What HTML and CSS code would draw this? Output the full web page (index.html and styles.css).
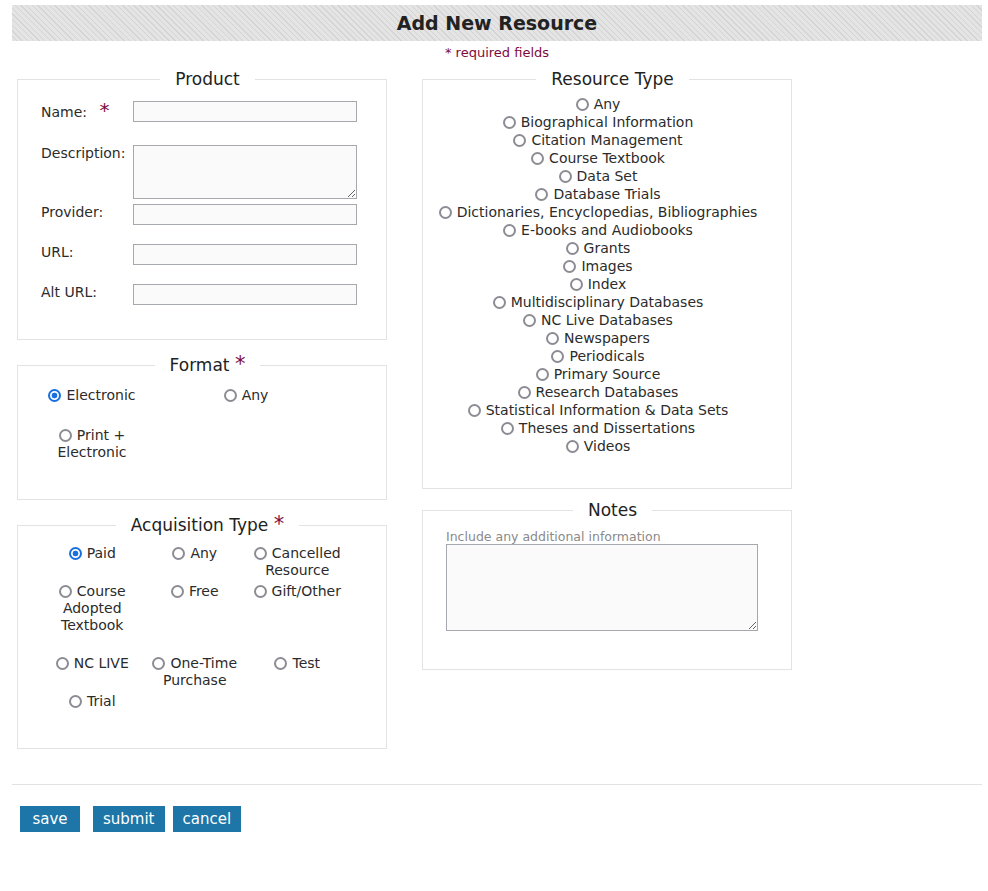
FILE: index.html
```html
<!DOCTYPE html>
<html lang="en">
<head>
<meta charset="utf-8">
<title>Add New Resource</title>
<link rel="stylesheet" href="styles.css">
</head>
<body>
<div class="page">
  <h1 class="title-bar">Add New Resource</h1>
  <p class="required-note">* required fields</p>

  <form class="columns">
    <div class="col col-left">
      <fieldset class="box">
        <legend>Product</legend>
        <div class="fields">
          <label class="lbl lbl-name">Name: <span class="req">*</span></label>
          <div class="row r-name"><input type="text" class="txt"></div>
          <label class="lbl">Description:</label>
          <div class="row r-desc"><textarea class="txt area"></textarea></div>
          <label class="lbl">Provider:</label>
          <div class="row r-std"><input type="text" class="txt"></div>
          <label class="lbl">URL:</label>
          <div class="row r-std"><input type="text" class="txt"></div>
          <label class="lbl">Alt URL:</label>
          <div class="row r-std"><input type="text" class="txt"></div>
        </div>
      </fieldset>

      <fieldset class="box box-format">
        <legend>Format <span class="req">*</span></legend>
        <div class="choices format-grid">
          <label class="opt"><input type="radio" name="format" checked>Electronic</label>
          <label class="opt"><input type="radio" name="format">Any</label>
          <label class="opt"><input type="radio" name="format">Print + Electronic</label>
        </div>
      </fieldset>

      <fieldset class="box box-acq">
        <legend>Acquisition Type <span class="req">*</span></legend>
        <div class="choices acq-grid">
          <label class="opt"><input type="radio" name="acq" checked>Paid</label>
          <label class="opt"><input type="radio" name="acq">Any</label>
          <label class="opt"><input type="radio" name="acq">Cancelled Resource</label>
          <label class="opt"><input type="radio" name="acq">Course Adopted Textbook</label>
          <label class="opt"><input type="radio" name="acq">Free</label>
          <label class="opt"><input type="radio" name="acq">Gift/Other</label>
          <label class="opt"><input type="radio" name="acq">NC LIVE</label>
          <label class="opt"><input type="radio" name="acq">One-Time Purchase</label>
          <label class="opt"><input type="radio" name="acq">Test</label>
          <label class="opt"><input type="radio" name="acq">Trial</label>
        </div>
      </fieldset>
    </div>

    <div class="col col-right">
      <fieldset class="box box-type">
        <legend>Resource Type</legend>
        <div class="type-list">
          <label class="type-item"><input type="radio" name="rtype">Any</label>
          <label class="type-item"><input type="radio" name="rtype">Biographical Information</label>
          <label class="type-item"><input type="radio" name="rtype">Citation Management</label>
          <label class="type-item"><input type="radio" name="rtype">Course Textbook</label>
          <label class="type-item"><input type="radio" name="rtype">Data Set</label>
          <label class="type-item"><input type="radio" name="rtype">Database Trials</label>
          <label class="type-item"><input type="radio" name="rtype">Dictionaries, Encyclopedias, Bibliographies</label>
          <label class="type-item"><input type="radio" name="rtype">E-books and Audiobooks</label>
          <label class="type-item"><input type="radio" name="rtype">Grants</label>
          <label class="type-item"><input type="radio" name="rtype">Images</label>
          <label class="type-item"><input type="radio" name="rtype">Index</label>
          <label class="type-item"><input type="radio" name="rtype">Multidisciplinary Databases</label>
          <label class="type-item"><input type="radio" name="rtype">NC Live Databases</label>
          <label class="type-item"><input type="radio" name="rtype">Newspapers</label>
          <label class="type-item"><input type="radio" name="rtype">Periodicals</label>
          <label class="type-item"><input type="radio" name="rtype">Primary Source</label>
          <label class="type-item"><input type="radio" name="rtype">Research Databases</label>
          <label class="type-item"><input type="radio" name="rtype">Statistical Information &amp; Data Sets</label>
          <label class="type-item"><input type="radio" name="rtype">Theses and Dissertations</label>
          <label class="type-item"><input type="radio" name="rtype">Videos</label>
        </div>
      </fieldset>

      <fieldset class="box box-notes">
        <legend>Notes</legend>
        <label class="notes-hint">Include any additional information</label>
        <textarea class="txt notes-area"></textarea>
      </fieldset>
    </div>
  </form>

  <hr class="divider">

  <div class="actions">
    <button type="button" class="btn btn-save">save</button>
    <button type="button" class="btn btn-submit">submit</button>
    <button type="button" class="btn">cancel</button>
  </div>
</div>
</body>
</html>
```

FILE: styles.css
```css
html, body {
  margin: 0;
  padding: 0;
  background: #ffffff;
}

body {
  font-family: "DejaVu Sans", Verdana, sans-serif;
  font-size: 14px;
  color: #2b2b2b;
}

.page {
  padding: 5px 6px 0 12px;
  width: 970px;
}

.title-bar {
  margin: 0;
  height: 36px;
  line-height: 37px;
  text-align: center;
  font-size: 19px;
  font-weight: bold;
  color: #222222;
  background: repeating-linear-gradient(45deg, #e4e4e4 0 3px, #d4d4d4 3px 4px);
}

.required-note {
  margin: 4px 0 0;
  line-height: 16px;
  font-size: 13px;
  text-align: center;
  color: #7d0a3c;
}

.columns {
  display: flex;
  gap: 35px;
  padding-left: 5px;
  margin-top: 8px;
  align-items: flex-start;
}

.col {
  width: 370px;
  display: flex;
  flex-direction: column;
}

.col-left { gap: 15px; }
.col-right { gap: 11px; }

.box {
  margin: 0;
  border: 1px solid #e3e3e3;
  padding: 0 12px 0 23px;
  min-width: 0;
}

.box legend {
  margin: 0 auto;
  padding: 0 15px;
  font-size: 17px;
  line-height: 20px;
  color: #222222;
}

.req {
  color: #7d0a3c;
  font-size: 21px;
  line-height: 0;
}

/* Product */
.fields {
  display: grid;
  grid-template-columns: 92px 224px;
  padding: 12px 0 15px;
}

.lbl {
  line-height: 17px;
  color: #2b2b2b;
}

.lbl-name {
  padding-top: 3px;
}

.lbl-name .req {
  font-size: 20px;
  margin-left: 8px;
}

.r-name { height: 44px; }
.r-desc { height: 59px; }
.r-std { height: 40px; }

.txt {
  display: block;
  box-sizing: border-box;
  width: 224px;
  height: 21px;
  margin: 0;
  padding: 1px 3px;
  border: 1px solid #a5a8ac;
  background: #fafafa;
  font-family: "DejaVu Sans", Verdana, sans-serif;
  font-size: 13px;
}

.area {
  height: 54px;
  resize: both;
}

/* Radios */
input[type="radio"] {
  appearance: none;
  -webkit-appearance: none;
  box-sizing: border-box;
  width: 13px;
  height: 13px;
  margin: 0 5px 0 0;
  border: 2px solid #8c8c94;
  border-radius: 50%;
  background: #ffffff;
  vertical-align: -2px;
}

input[type="radio"]:checked {
  border-color: #1a6fe0;
  background: radial-gradient(circle, #1a6fe0 0 2.6px, #ffffff 3.2px);
}

.choices {
  display: grid;
  align-items: start;
}

.opt {
  display: block;
  text-align: center;
  line-height: 17px;
}

.format-grid {
  grid-template-columns: 102px 102px;
  grid-template-rows: 40px auto;
  column-gap: 52px;
  padding: 12px 0 38px;
}

.acq-grid {
  grid-template-columns: repeat(3, 102.5px);
  grid-template-rows: 38px 72px 38px auto;
  padding: 10px 0 38px;
}

/* Resource type */
.type-list {
  margin: 0 6px 0 -23px;
  padding: 6px 0 33px;
}

.type-item {
  display: block;
  text-align: center;
  line-height: 18px;
  white-space: nowrap;
}

/* Notes */
.notes-hint {
  display: block;
  margin-top: 9px;
  line-height: 15px;
  font-size: 12.5px;
  color: #8a8a8a;
}

.notes-area {
  width: 312px;
  height: 87px;
  margin-bottom: 38px;
  resize: both;
}

/* Footer */
.divider {
  border: 0;
  height: 1px;
  background: #e2e2e2;
  margin: 35px 0 21px;
}

.actions {
  display: flex;
  padding-left: 8px;
}

.btn {
  min-width: 60px;
  height: 26px;
  padding: 0 10px;
  margin: 0 8px 0 0;
  border: 0;
  background: #1d75a8;
  color: #ffffff;
  font-family: "DejaVu Sans", Verdana, sans-serif;
  font-size: 15px;
  line-height: 26px;
  text-align: center;
}

.btn-save {
  margin-right: 13px;
}
```
